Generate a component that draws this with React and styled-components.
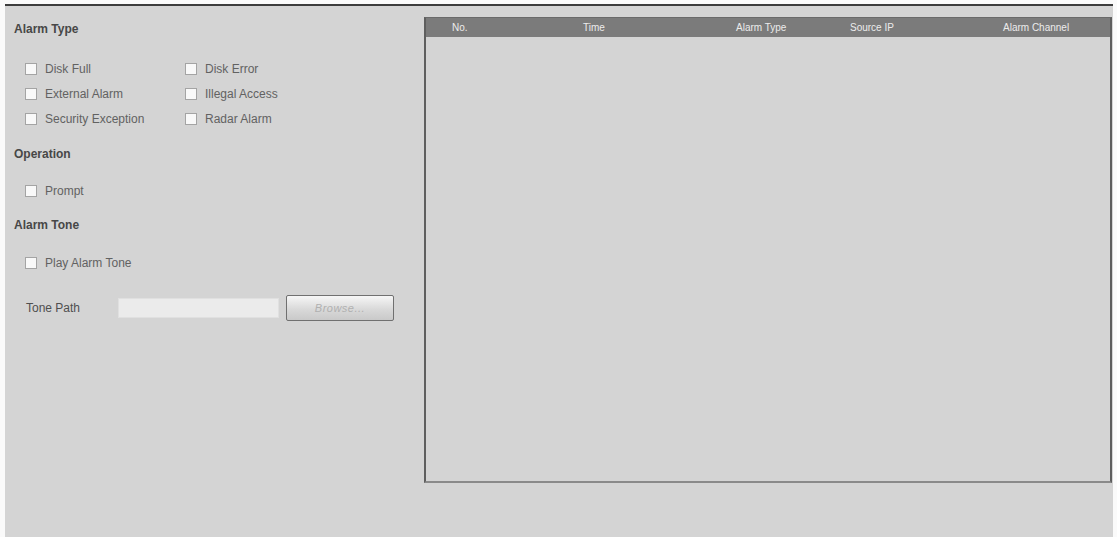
import React from 'react';
import styled, { createGlobalStyle } from 'styled-components';

const GlobalStyle = createGlobalStyle`
  html, body {
    margin: 0;
    padding: 0;
    background: #fafafa;
  }
  body {
    font-family: "Liberation Sans", Arial, sans-serif;
    font-size: 12px;
  }
`;

const Page = styled.div`
  margin: 4px 4px 0 5px;
  height: 533px;
  box-sizing: border-box;
  border-top: 2px solid #3c3c3c;
  background: #d4d4d4;
  display: flex;
  padding-top: 11px;
`;

const Settings = styled.div`
  width: 419px;
  padding: 4px 0 0 9px;
  box-sizing: border-box;
  display: flex;
  flex-direction: column;
`;

const SectionTitle = styled.div`
  height: 16px;
  line-height: 16px;
  font-weight: bold;
  color: #474747;
  margin-top: ${({ $gap }) => $gap || 0}px;
`;

const CheckGrid = styled.div`
  display: grid;
  grid-template-columns: 160px 160px;
  grid-auto-rows: 25px;
  padding-left: 11px;
  margin-top: ${({ $gap }) => $gap || 0}px;
`;

const CheckItem = styled.label`
  display: flex;
  align-items: center;
  color: #626262;
`;

const Box = styled.span`
  width: 10px;
  height: 10px;
  border: 1px solid #a4a4a4;
  background: #f9f9f9;
  margin-right: 8px;
  flex-shrink: 0;
`;

const PathRow = styled.div`
  display: flex;
  align-items: center;
  height: 26px;
  padding-left: 12px;
  margin-top: 20px;
`;

const PathLabel = styled.span`
  width: 92px;
  color: #4f4f4f;
`;

const PathInput = styled.div`
  width: 161px;
  height: 20px;
  background: #ebebeb;
  border: 1px solid #e0e0e0;
  box-sizing: border-box;
`;

const BrowseButton = styled.div`
  width: 108px;
  height: 26px;
  margin-left: 7px;
  box-sizing: border-box;
  border: 1px solid #707070;
  border-radius: 2px;
  background: linear-gradient(#f6f6f6, #d9d9d9 55%, #c9c9c9);
  color: #b0b0b0;
  font-size: 11px;
  font-style: italic;
  display: flex;
  align-items: center;
  justify-content: center;
  letter-spacing: 0.5px;
`;

const Table = styled.div`
  width: 688px;
  height: 466px;
  box-sizing: border-box;
  border-left: 2px solid #5e5e5e;
  border-right: 2px solid #5e5e5e;
  border-bottom: 2px solid #8a8a8a;
  border-top: 1px solid #6a6a6a;
  display: flex;
  flex-direction: column;
`;

const HeaderRow = styled.div`
  display: grid;
  grid-template-columns: 131px 153px 114px 153px 1fr;
  height: 19px;
  align-items: center;
  padding-left: 26px;
  background: #7b7b7b;
  color: #ececec;
  font-size: 10px;
`;

const HeadCell = styled.span`
  white-space: nowrap;
`;

const Check = ({ children }) => (
  <CheckItem>
    <Box />
    {children}
  </CheckItem>
);

const columns = ['No.', 'Time', 'Alarm Type', 'Source IP', 'Alarm Channel'];

export default function App() {
  return (
    <>
      <GlobalStyle />
      <Page>
        <Settings>
          <SectionTitle>Alarm Type</SectionTitle>
          <CheckGrid $gap={19}>
            <Check>Disk Full</Check>
            <Check>Disk Error</Check>
            <Check>External Alarm</Check>
            <Check>Illegal Access</Check>
            <Check>Security Exception</Check>
            <Check>Radar Alarm</Check>
          </CheckGrid>

          <SectionTitle $gap={15}>Operation</SectionTitle>
          <CheckGrid $gap={16}>
            <Check>Prompt</Check>
          </CheckGrid>

          <SectionTitle $gap={14}>Alarm Tone</SectionTitle>
          <CheckGrid $gap={17}>
            <Check>Play Alarm Tone</Check>
          </CheckGrid>

          <PathRow>
            <PathLabel>Tone Path</PathLabel>
            <PathInput />
            <BrowseButton>Browse...</BrowseButton>
          </PathRow>
        </Settings>

        <Table>
          <HeaderRow>
            {columns.map((c) => (
              <HeadCell key={c}>{c}</HeadCell>
            ))}
          </HeaderRow>
        </Table>
      </Page>
    </>
  );
}
